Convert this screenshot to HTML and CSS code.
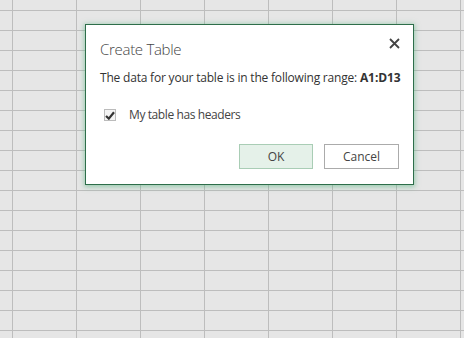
FILE: index.html
```html
<!DOCTYPE html>
<html>
<head>
<meta charset="utf-8">
<link rel="stylesheet" href="styles.css">
</head>
<body>
<div class="sheet"></div>
<div class="dialog">
  <div class="head">
    <div class="title">Create Table</div>
    <svg class="close" width="11" height="11" viewBox="0 0 11 11"><path d="M1 1L10 10M10 1L1 10" stroke="#444" stroke-width="1.8"/></svg>
  </div>
  <div class="msg">The data for your table is in the following range: <b>A1:D13</b></div>
  <label class="check">
    <span class="box"><svg width="10" height="9" viewBox="0 0 10 9"><path d="M1 5L3.8 7.6L9 1.2" fill="none" stroke="#333" stroke-width="2.2"/></svg></span>
    <span>My table has headers</span>
  </label>
  <div class="buttons">
    <div class="btn ok">OK</div>
    <div class="btn cancel">Cancel</div>
  </div>
</div>
</body>
</html>
```
FILE: styles.css
```css
html, body { margin: 0; padding: 0; }
body {
  width: 464px; height: 338px; overflow: hidden;
  font-family: "Open Sans", "Noto Sans", sans-serif;
  background-color: #e6e6e6;
  background-image:
    linear-gradient(to right, #bdbdbd 1px, transparent 1px),
    linear-gradient(to bottom, #bdbdbd 1px, transparent 1px);
  background-size: 64px 20px;
  background-position: 12px 10px;
  position: relative;
}
.dialog {
  position: absolute; left: 85px; top: 24px;
  width: 329px; height: 161px;
  box-sizing: border-box;
  background: #fff;
  border: 1px solid #2e6e4a;
  box-shadow: 0 1px 5px 1px rgba(90, 180, 130, 0.55);
  color: #333;
  display: flex; flex-direction: column;
  padding: 14px 14px 0 14px;
}
.head { display: flex; justify-content: space-between; align-items: flex-start; height: 20px; }
.title { font-size: 15px; line-height: 20px; font-weight: 300; color: #444; letter-spacing: -0.3px; }
.close { margin-top: -1px; margin-right: -1px; }
.msg { font-size: 12px; line-height: 16px; margin-top: 11px; color: #333; letter-spacing: -0.2px; white-space: nowrap; }
.msg b { font-weight: 700; letter-spacing: -0.1px; }
.check { display: flex; align-items: center; margin-top: 21px; padding-left: 4px; font-size: 12px; line-height: 16px; color: #444; letter-spacing: -0.4px; }
.box { width: 10px; height: 10px; border: 1px solid #bbb; background: #f4f4f4; display: flex; align-items: center; justify-content: center; margin-right: 13px; }
.buttons { display: flex; justify-content: flex-end; gap: 11px; margin-top: 21px; }
.btn { height: 25px; box-sizing: border-box; border: 1px solid #ababab; background: #fff; font-size: 12px; color: #444; display: flex; align-items: center; justify-content: center; }
.ok { width: 74px; background: #e5f1e9; border-color: #a9cdb5; }
.cancel { width: 75px; }
```
